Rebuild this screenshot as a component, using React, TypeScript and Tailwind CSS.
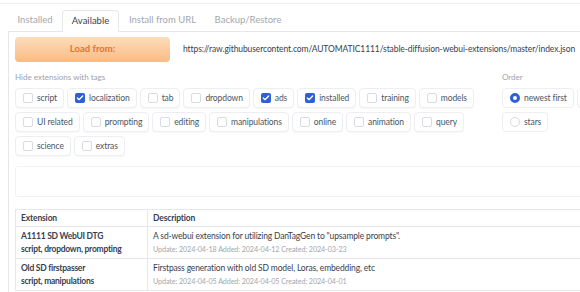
import { Check } from 'lucide-react'

const tagRows = [
    ['script', 'localization', 'tab', 'dropdown', 'ads', 'installed', 'training', 'models'],
    ['UI related', 'prompting', 'editing', 'manipulations', 'online', 'animation', 'query'],
    ['science', 'extras'],
]

const checkedTags = ['localization', 'ads', 'installed']

const rows = [
    {
        name: 'A1111 SD WebUI DTG',
        tags: 'script, dropdown, prompting',
        desc: 'A sd-webui extension for utilizing DanTagGen to "upsample prompts".',
        meta: 'Update: 2024-04-18 Added: 2024-04-12 Created: 2024-03-23',
    },
    {
        name: 'Old SD firstpasser',
        tags: 'script, manipulations',
        desc: 'Firstpass generation with old SD model, Loras, embedding, etc',
        meta: 'Update: 2024-04-05 Added: 2024-04-05 Created: 2024-04-01',
    },
]

function TagChip({ label, checked }: { label: string; checked: boolean }) {
    return (
        <label className="flex h-[20px] shrink-0 items-center gap-[4px] whitespace-nowrap rounded-[4px] border border-[#eceef1] bg-white pl-[7px] pr-[6px] text-[8.5px] tracking-[-0.1px] text-[#4b5563] shadow-[0_1px_1px_rgba(0,0,0,0.03)]">
            {checked ? (
                <span className="flex h-[10px] w-[10px] items-center justify-center rounded-[2px] bg-[#2f5fd8]">
                    <Check className="h-[8px] w-[8px] text-white" strokeWidth={4} />
                </span>
            ) : (
                <span className="h-[10px] w-[10px] rounded-[2px] border border-[#d8dbe0] bg-white" />
            )}
            <span>{label}</span>
        </label>
    )
}

function RadioChip({ label, checked }: { label: string; checked: boolean }) {
    return (
        <label className="flex h-[20px] shrink-0 items-center gap-[4px] whitespace-nowrap rounded-[4px] border border-[#eceef1] bg-white pl-[7px] pr-[6px] text-[8.5px] tracking-[-0.1px] text-[#4b5563]">
            {checked ? (
                <span className="h-[10px] w-[10px] rounded-full border-[3px] border-[#2f5fd8] bg-white" />
            ) : (
                <span className="h-[10px] w-[10px] rounded-full border border-[#d8dbe0] bg-white" />
            )}
            <span>{label}</span>
        </label>
    )
}

export default function App() {
    return (
        <div className="relative h-[292px] w-[580px] overflow-hidden bg-white font-['Lato',sans-serif]">
            <div className="mt-[3px] border-t border-[#eceef1]" />

            {/* Tabs */}
            <div className="mt-[6px] flex pl-[8px] text-[9.5px]">
                <div className="flex h-[21px] w-[54px] items-center justify-center text-[#a3a7ae]">Installed</div>
                <div className="relative z-10 -mb-px flex h-[22px] w-[57px] items-center justify-center rounded-t-[4px] border border-b-0 border-[#e5e7eb] bg-white text-[#374151]">
                    Available
                </div>
                <div className="flex h-[21px] w-[87px] items-center justify-center text-[#a3a7ae]">Install from URL</div>
                <div className="flex h-[21px] w-[84px] items-center justify-center text-[#a3a7ae]">Backup/Restore</div>
            </div>

            {/* Panel */}
            <div className="ml-[8px] h-[300px] border-l border-t border-[#e5e7eb] pl-[6px] pt-[5px]">
                <div className="flex items-center gap-[10px]">
                    <button className="h-[25px] w-[155px] shrink-0 rounded-[4px] bg-gradient-to-b from-[#fddcbc] to-[#f9bb83] text-[9.5px] font-bold text-[#e27630]">
                        Load from:
                    </button>
                    <div className="flex h-[25px] min-w-0 flex-1 items-center overflow-hidden whitespace-nowrap pl-[3px] text-[8.5px] tracking-[-0.1px] text-[#374151]">
                        https://raw.githubusercontent.com/AUTOMATIC1111/stable-diffusion-webui-extensions/master/index.json
                    </div>
                </div>

                <div className="mt-[9px] flex">
                    <div className="w-[487px] shrink-0">
                        <div className="text-[8px] text-[#9ca3af]">Hide extensions with tags</div>
                        <div className="mt-[5px] flex flex-col gap-[4px]">
                            {tagRows.map((r, i) => (
                                <div key={i} className="flex gap-[3px]">
                                    {r.map((t) => (
                                        <TagChip key={t} label={t} checked={checkedTags.includes(t)} />
                                    ))}
                                </div>
                            ))}
                        </div>
                    </div>
                    <div className="min-w-0 flex-1">
                        <div className="text-[8px] text-[#9ca3af]">Order</div>
                        <div className="mt-[5px] flex flex-col gap-[4px]">
                            <div className="flex gap-[3px]">
                                <RadioChip label="newest first" checked />
                                <RadioChip label="oldest first" checked={false} />
                            </div>
                            <div className="flex">
                                <RadioChip label="stars" checked={false} />
                            </div>
                        </div>
                    </div>
                </div>

                <div className="mt-[10px] h-[31px] w-[600px] rounded-[3px] border border-[#f1f2f4]" />

                {/* Table */}
                <table className="mt-[12px] w-[600px] border-collapse text-[8.5px] tracking-[-0.15px] text-[#374151]">
                    <thead>
                        <tr className="h-[17px]">
                            <th className="w-[132px] border border-[#e5e7eb] px-[5px] text-left font-bold">Extension</th>
                            <th className="border border-[#e5e7eb] px-[5px] text-left font-bold">Description</th>
                        </tr>
                    </thead>
                    <tbody>
                        {rows.map((r) => (
                            <tr key={r.name} className="h-[32px]">
                                <td className="border border-[#e5e7eb] px-[5px] align-middle text-[8.5px] font-bold leading-[13px] tracking-[-0.25px]">
                                    <div>{r.name}</div>
                                    <div>{r.tags}</div>
                                </td>
                                <td className="whitespace-nowrap border border-[#e5e7eb] px-[5px] align-middle leading-[13px]">
                                    <div>{r.desc}</div>
                                    <div className="text-[7.2px] tracking-[-0.1px] text-[#a3a7ae]">{r.meta}</div>
                                </td>
                            </tr>
                        ))}
                    </tbody>
                </table>
            </div>
        </div>
    )
}
